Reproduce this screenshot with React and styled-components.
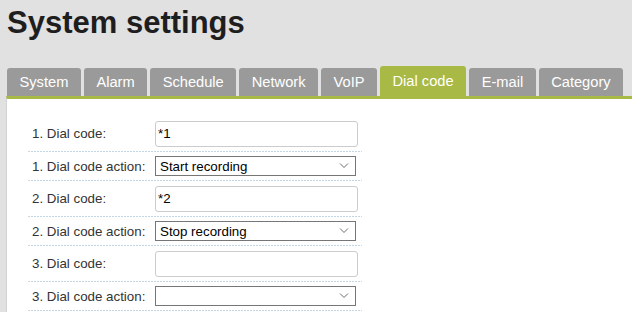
import React from "react";
import styled, { createGlobalStyle } from "styled-components";

const Global = createGlobalStyle`
  html, body { margin: 0; padding: 0; overflow: hidden; }
  body {
    background: #e1e1e1;
    font-family: "Liberation Sans", Arial, sans-serif;
  }
`;

const Page = styled.div`
  padding-left: 6px;
  height: 312px;
  display: flex;
  flex-direction: column;
`;

const Title = styled.h1`
  margin: 7px 0 28px 1px;
  font-size: 31px;
  line-height: 31px;
  font-weight: bold;
  color: #1e1e1e;
`;

const Tabs = styled.div`
  display: flex;
  align-items: flex-end;
  gap: 3px;
  margin-left: 1px;
`;

const Tab = styled.div`
  height: ${(p) => (p.$active ? 30 : 28)}px;
  padding: 0 12.5px;
  padding-top: ${(p) => (p.$active ? 0 : 0)}px;
  box-sizing: border-box;
  display: flex;
  align-items: center;
  padding-bottom: ${(p) => (p.$active ? 0 : 1)}px;
  background: ${(p) => (p.$active ? "#a9b945" : "#9a9a9a")};
  color: #fff;
  font-size: 14.67px;
  border-radius: 3px 3px 0 0;
  white-space: nowrap;
`;

const Panel = styled.div`
  flex: 1;
  background: #fff;
  border-top: 3px solid #a9b945;
  border-left: 1px solid #d2d2d2;
  padding: 17px 0 0 21px;
`;

const Form = styled.div`
  width: 334px;
  display: flex;
  flex-direction: column;
`;

const Row = styled.div`
  display: flex;
  align-items: center;
  height: ${(p) => (p.$tall ? 36 : 29)}px;
  box-sizing: border-box;
  padding-bottom: 1px;
  background-image: linear-gradient(to right, #c3d6e6 2px, transparent 2px);
  background-size: 3px 1px;
  background-repeat: repeat-x;
  background-position: left bottom;
`;

const Label = styled.div`
  width: 127px;
  box-sizing: border-box;
  padding-left: 4px;
  font-size: 13.33px;
  color: #333;
  white-space: nowrap;
`;

const TextInput = styled.input`
  width: 203px;
  height: 26px;
  box-sizing: border-box;
  border: 1px solid #cccccc;
  border-radius: 3px;
  padding: 0 2px;
  font-family: "Liberation Sans", Arial, sans-serif;
  font-size: 13.33px;
  color: #000;
  background: #fff;
  outline: none;
`;

const SelectBox = styled.div`
  position: relative;
  width: 201px;
  height: 20px;
  box-sizing: border-box;
  border: 1px solid #767676;
  display: flex;
  align-items: center;
  padding-left: 4px;
  font-size: 13.33px;
  color: #000;
  background: #fff;
`;

const Chevron = styled.svg`
  position: absolute;
  right: 6px;
  top: 5px;
`;

const Select = ({ value }) => (
  <SelectBox>
    {value}
    <Chevron width="10" height="7" viewBox="0 0 10 7">
      <path d="M1 1.5 L5 5.5 L9 1.5" fill="none" stroke="#6d6d6d" strokeWidth="1" />
    </Chevron>
  </SelectBox>
);

const tabs = ["System", "Alarm", "Schedule", "Network", "VoIP", "Dial code", "E-mail", "Category"];

const rows = [
  { n: 1, code: "*1", action: "Start recording" },
  { n: 2, code: "*2", action: "Stop recording" },
  { n: 3, code: "", action: "" },
];

export default function App() {
  return (
    <>
      <Global />
      <Page>
        <Title>System settings</Title>
        <Tabs>
          {tabs.map((t) => (
            <Tab key={t} $active={t === "Dial code"}>
              {t}
            </Tab>
          ))}
        </Tabs>
        <Panel>
          <Form>
            {rows.map((r) => (
              <React.Fragment key={r.n}>
                <Row $tall>
                  <Label>{r.n}. Dial code:</Label>
                  <TextInput defaultValue={r.code} />
                </Row>
                <Row>
                  <Label>{r.n}. Dial code action:</Label>
                  <Select value={r.action} />
                </Row>
              </React.Fragment>
            ))}
          </Form>
        </Panel>
      </Page>
    </>
  );
}
